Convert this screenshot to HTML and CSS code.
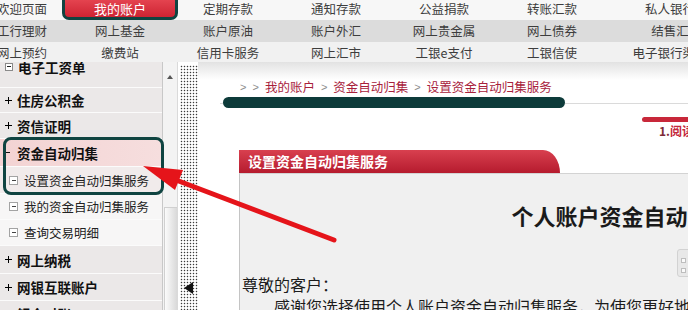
FILE: index.html
```html
<!DOCTYPE html>
<html lang="zh-CN">
<head>
<meta charset="utf-8">
<title>设置资金自动归集服务</title>
<link rel="stylesheet" href="styles.css">
</head>
<body>
<div class="page">
  <nav class="topnav">
    <ul class="navrow row1">
      <li class="first">欢迎页面</li>
      <li><span class="tab-active">我的账户</span></li>
      <li>定期存款</li>
      <li>通知存款</li>
      <li>公益捐款</li>
      <li>转账汇款</li>
      <li>私人银行</li>
    </ul>
    <ul class="navrow row2">
      <li class="first">工行理财</li>
      <li>网上基金</li>
      <li>账户原油</li>
      <li>账户外汇</li>
      <li>网上贵金属</li>
      <li>网上债券</li>
      <li>结售汇</li>
    </ul>
    <ul class="navrow row3">
      <li class="first">网上预约</li>
      <li>缴费站</li>
      <li>信用卡服务</li>
      <li>网上汇市</li>
      <li>工银e支付</li>
      <li>工银信使</li>
      <li>电子银行渠道</li>
    </ul>
  </nav>

  <div class="content">
    <aside class="side">
      <ul class="menu">
        <li class="item grp top"><i class="ico boxed"></i>电子工资单</li>
        <li class="item grp h25"><i class="ico plus"></i>住房公积金</li>
        <li class="item grp"><i class="ico plus"></i>资信证明</li>
        <li class="item grp open h28"><i class="ico dash"></i>资金自动归集</li>
        <li class="item sub cur h27"><i class="ico box"></i>设置资金自动归集服务</li>
        <li class="item sub"><i class="ico box"></i>我的资金自动归集服务</li>
        <li class="item sub"><i class="ico box"></i>查询交易明细</li>
        <li class="item grp h28"><i class="ico plus"></i>网上纳税</li>
        <li class="item grp h27"><i class="ico plus"></i>网银互联账户</li>
        <li class="item grp"><i class="ico plus"></i>银企对账</li>
      </ul>
      <div class="vscroll">
        <span class="up"><i class="up-tri"></i></span>
        <span class="thumb"></span>
      </div>
    </aside>

    <div class="splitter"><i class="collapse"></i></div>

    <main class="main">
      <div class="crumbs">
        <span class="sep">&gt;</span>
        <span class="sep">&gt;</span>
        <span>我的账户</span>
        <span class="sep">&gt;</span>
        <span>资金自动归集</span>
        <span class="sep">&gt;</span>
        <span>设置资金自动归集服务</span>
      </div>
      <div class="crumb-rule"></div>

      <div class="steps">
        <div class="step-bar"></div>
        <div class="step-label"><span class="num">1.</span>阅读协议</div>
      </div>

      <section class="panel">
        <div class="panel-tab">设置资金自动归集服务</div>
        <div class="panel-body">
          <h1 class="doc-title">个人账户资金自动归集服务协议</h1>
          <p class="para greet">尊敬的客户：</p>
          <p class="para indent">感谢您选择使用个人账户资金自动归集服务，为使您更好地了解本服务的相关内容，请您仔细阅读以下协议。</p>
        </div>
      </section>
    </main>
  </div>

  <div class="float-btn"><i></i><i></i><i></i><i></i></div>

  <div class="mark mark-tab"></div>
  <div class="mark mark-menu"></div>
  <div class="mark-crumb"></div>

  <svg class="arrow" width="688" height="310" viewBox="0 0 688 310">
    <line x1="176" y1="180" x2="334" y2="240" stroke="#e5141a" stroke-width="5" stroke-linecap="round"/>
    <polygon points="143,166 183,170 175,190" fill="#e5141a"/>
  </svg>
</div>
</body>
</html>
```

FILE: styles.css
```css
html, body {
  margin: 0;
  padding: 0;
  overflow: hidden;
  background: #fff;
}

.page {
  position: relative;
  width: 688px;
  height: 310px;
  overflow: hidden;
  font-family: "Noto Sans CJK SC", "Noto Sans", sans-serif;
  color: #222;
}

/* ---------- top navigation ---------- */
.navrow {
  list-style: none;
  margin: 0;
  padding: 0;
  display: grid;
  grid-template-columns: 66px repeat(5, 108px) 128px;
  font-size: 12.5px;
  color: #3d3d3d;
  white-space: nowrap;
}
.navrow li {
  text-align: center;
  overflow: visible;
}
.navrow li.first {
  text-align: left;
  text-indent: -3px;
}
.row1 {
  height: 20px;
  line-height: 17px;
  background: #f7f7f7;
}
.row2 {
  height: 22px;
  line-height: 22px;
  background: #dcdcdc;
}
.row3 {
  height: 20px;
  line-height: 21px;
  background: #f1f1f1;
}
.tab-active {
  display: block;
  width: 110px;
  height: 18px;
  margin-left: -1px;
  background: linear-gradient(#e4434f, #cc2231);
  color: #fff;
  text-align: center;
  font-size: 13px;
  line-height: 17px;
}

/* ---------- content area ---------- */
.content {
  display: flex;
  height: 248px;
}

.side {
  display: flex;
  width: 178px;
  flex: none;
}
.menu {
  list-style: none;
  margin: 0;
  padding: 0;
  width: 162px;
  border-right: 1px solid #c8c8c8;
  overflow: hidden;
  background: #f6f6f6;
}
.item {
  display: flex;
  align-items: center;
  box-sizing: border-box;
  height: 26px;
  white-space: nowrap;
  border-bottom: 1px solid #fbfbfb;
}
.item.h25 { height: 25px; }
.item.h27 { height: 27px; }
.item.h28 { height: 28px; }
.item.top {
  padding-bottom: 16px;
}
.grp {
  background: #ebe8e8;
  font-size: 13.5px;
  font-weight: bold;
  color: #111;
}
.grp.open {
  background: linear-gradient(90deg, #f3d3d3, #f6dede);
}
.sub {
  background: #f7f6f6;
  font-size: 12.5px;
  color: #222;
}
.sub.cur {
  background: #f1ebeb;
}

.ico {
  display: block;
  flex: none;
}
.ico.plus {
  width: 7px;
  height: 7px;
  margin: 0 5px;
  background:
    linear-gradient(#000, #000) center / 7px 1px no-repeat,
    linear-gradient(#000, #000) center / 1px 7px no-repeat;
}
.ico.boxed {
  width: 6px;
  height: 6px;
  margin: 0 5px;
  border: 1px solid #8a8a8a;
  background: #fff linear-gradient(#222, #222) center / 4px 1px no-repeat;
  box-sizing: content-box;
}
.ico.dash {
  width: 4px;
  height: 1px;
  margin: 0 7px 0 6px;
  background: #111;
}
.ico.box {
  width: 7px;
  height: 7px;
  margin: 0 6px 0 9px;
  border: 1px solid #a3a3a3;
  background: #fff linear-gradient(#444, #444) center / 4px 1px no-repeat;
}

.vscroll {
  width: 15px;
  flex: none;
  display: flex;
  flex-direction: column;
  background: #f3f3f3;
  border-right: 1px solid #dadada;
  box-sizing: border-box;
}
.up {
  display: flex;
  justify-content: center;
  padding-top: 13px;
}
.up-tri {
  width: 0;
  height: 0;
  border-left: 3.5px solid transparent;
  border-right: 3.5px solid transparent;
  border-bottom: 4px solid #555;
}
.thumb {
  margin-top: auto;
  height: 102px;
  margin-left: 1px;
  background: linear-gradient(90deg, #fbfbfb, #d9d9d9);
  border-left: 1px solid #d0d0d0;
  border-top: 1px solid #d0d0d0;
}

.splitter {
  flex: none;
  width: 18px;
  margin: 3px 0 0 2px;
  background-color: #fff;
  background-image: radial-gradient(circle, #3a3a3a 0.75px, transparent 1.05px);
  background-size: 3px 3px;
  display: flex;
  flex-direction: column;
  justify-content: flex-end;
  padding-bottom: 16px;
  box-sizing: border-box;
}
.collapse {
  display: block;
  width: 0;
  height: 0;
  margin-left: 4px;
  border-top: 6px solid transparent;
  border-bottom: 6px solid transparent;
  border-right: 9px solid #111;
}

.main {
  flex: 1;
  min-width: 0;
  overflow: hidden;
  background: linear-gradient(#e2e2e2, #fff 18px);
}

.crumbs {
  display: flex;
  gap: 6px;
  margin: 18px 0 0 42px;
  height: 14px;
  line-height: 14px;
  font-size: 12.5px;
  color: #a8213b;
  white-space: nowrap;
}
.sep {
  color: #8c8c8c;
  font-family: "Liberation Sans", sans-serif;
  font-size: 11px;
}
.crumb-rule {
  margin: 9px 0 0 22px;
  height: 1px;
  background: #dadada;
}

.steps {
  margin: 13px 0 0 444px;
  width: 120px;
}
.step-bar {
  height: 5px;
  background: #c8283a;
  border-radius: 3px 0 0 3px;
}
.step-label {
  margin-top: 2px;
  padding-left: 17px;
  line-height: 14px;
  font-size: 12px;
  font-weight: bold;
  color: #c4283c;
  white-space: nowrap;
}
.step-label .num {
  color: #7d2a36;
}

.panel {
  margin: 12px 0 0 41px;
  width: 852px;
}
.panel-tab {
  width: 321px;
  height: 23px;
  box-sizing: border-box;
  padding-left: 9px;
  line-height: 23px;
  font-size: 14px;
  font-weight: bold;
  color: #fff;
  background: linear-gradient(#d8404f, #b61b2e);
  border-top-right-radius: 17px 23px;
}
.panel-body {
  height: 200px;
  background: #f0f0f0;
  border-left: 1px solid #c4c4c4;
  border-top: 1px solid #d3d3d3;
}
.doc-title {
  margin: 0;
  padding-top: 26px;
  font-size: 22px;
  line-height: 30px;
  font-weight: bold;
  text-align: center;
  color: #1a1a1a;
}
.para {
  margin: 0;
  padding-left: 2px;
  font-size: 16px;
  line-height: 22px;
  color: #1c1c1c;
  white-space: nowrap;
}
.greet {
  margin-top: 43px;
}
.indent {
  text-indent: 32px;
}

/* floating helper button at right edge */
.float-btn {
  position: absolute;
  left: 677px;
  top: 249px;
  width: 20px;
  height: 28px;
  box-sizing: border-box;
  border: 1px solid #d2d2d2;
  border-radius: 3px;
  background: #e8e8e8;
  display: grid;
  grid-template-columns: 5px 5px;
  gap: 2px;
  padding: 8px 0 0 3px;
}
.float-btn i {
  display: block;
  width: 5px;
  height: 5px;
  border: 1px solid #bdbdbd;
  background: #fafafa;
  box-sizing: border-box;
}

/* ---------- annotations drawn over the screenshot ---------- */
.mark {
  position: absolute;
  box-sizing: border-box;
  border: 3px solid #0f4441;
}
.mark-tab {
  left: 62px;
  top: -6px;
  width: 116px;
  height: 26px;
  border-radius: 7px;
}
.mark-menu {
  left: 3px;
  top: 137px;
  width: 161px;
  height: 58px;
  border-radius: 8px;
}
.mark-crumb {
  position: absolute;
  left: 223px;
  top: 97px;
  width: 342px;
  height: 11px;
  border-radius: 6px;
  background: #0d3b3a;
}
.arrow {
  position: absolute;
  left: 0;
  top: 0;
  pointer-events: none;
}
```
